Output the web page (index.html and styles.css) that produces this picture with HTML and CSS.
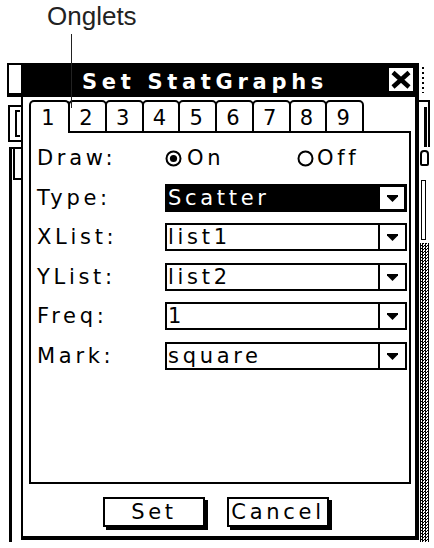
FILE: index.html
```html
<!DOCTYPE html>
<html lang="fr">
<head>
<meta charset="utf-8">
<title>Set StatGraphs</title>
<link rel="stylesheet" href="styles.css">
</head>
<body>
<div class="page">
  <div class="caption">Onglets</div>
  <div class="leader"></div>
  <div class="titlebar">
    <div class="tb-bar">
      <div class="tb-stub"></div>
      <div class="tb-title">Set StatGraphs</div>
      <div class="tb-close">
        <svg width="24" height="23" viewBox="0 0 24 23"><path d="M4 4.5L20 19M20 4.5L4 19" stroke="#000" stroke-width="4.5" fill="none"/></svg>
      </div>
    </div>
    <div class="tb-scroll"><div class="tb-dots"></div></div>
  </div>
  <div class="main">
    <div class="lstrip">
      <div class="lbox"><div class="lbracket"></div></div>
      <div class="lbar"><div class="lthumb"></div></div>
    </div>
    <div class="dialog">
      <div class="tabs">
        <div class="tab tab-first active">1</div>
        <div class="tab">2</div>
        <div class="tab">3</div>
        <div class="tab">4</div>
        <div class="tab">5</div>
        <div class="tab">6</div>
        <div class="tab">7</div>
        <div class="tab">8</div>
        <div class="tab">9</div>
      </div>
      <div class="panel">
        <div class="row">
          <div class="label">Draw:</div>
          <div class="radios">
            <div class="radio">
              <svg width="17" height="17" viewBox="0 0 17 17"><circle cx="8.5" cy="8.5" r="7" fill="none" stroke="#000" stroke-width="2"/><circle cx="8.5" cy="8.5" r="3.6" fill="#000"/></svg>
              <span class="rlabel">On</span>
            </div>
            <div class="radio">
              <svg width="17" height="17" viewBox="0 0 17 17"><circle cx="8.5" cy="8.5" r="7" fill="none" stroke="#000" stroke-width="2"/></svg>
              <span class="rlabel">Off</span>
            </div>
          </div>
        </div>
        <div class="row">
          <div class="label">Type:</div>
          <div class="select selected"><span class="val">Scatter</span><span class="arrow"><svg width="11" height="7" viewBox="0 0 11 7"><path d="M0 0H11V1.5L5.5 7L0 1.5Z" fill="#000"/></svg></span></div>
        </div>
        <div class="row">
          <div class="label">XList:</div>
          <div class="select"><span class="val">list1</span><span class="arrow"><svg width="11" height="7" viewBox="0 0 11 7"><path d="M0 0H11V1.5L5.5 7L0 1.5Z" fill="#000"/></svg></span></div>
        </div>
        <div class="row">
          <div class="label">YList:</div>
          <div class="select"><span class="val">list2</span><span class="arrow"><svg width="11" height="7" viewBox="0 0 11 7"><path d="M0 0H11V1.5L5.5 7L0 1.5Z" fill="#000"/></svg></span></div>
        </div>
        <div class="row">
          <div class="label">Freq:</div>
          <div class="select"><span class="val">1</span><span class="arrow"><svg width="11" height="7" viewBox="0 0 11 7"><path d="M0 0H11V1.5L5.5 7L0 1.5Z" fill="#000"/></svg></span></div>
        </div>
        <div class="row">
          <div class="label">Mark:</div>
          <div class="select"><span class="val">square</span><span class="arrow"><svg width="11" height="7" viewBox="0 0 11 7"><path d="M0 0H11V1.5L5.5 7L0 1.5Z" fill="#000"/></svg></span></div>
        </div>
      </div>
      <div class="buttons">
        <div class="btn">Set</div>
        <div class="btn">Cancel</div>
      </div>
    </div>
    <div class="rstrip">
      <div class="rbox"><div class="rbar"></div></div>
      <div class="rarrow"></div>
      <div class="rthin"></div>
      <div class="rdots"></div>
    </div>
  </div>
</div>
</body>
</html>
```

FILE: styles.css
```css
* { box-sizing: border-box; margin: 0; padding: 0; }
html, body { width: 434px; height: 548px; overflow: hidden; background: #fff; }
body { font-family: "DejaVu Sans", "Liberation Sans", sans-serif; color: #000; }

.page { position: relative; width: 434px; height: 548px; }

.caption {
  height: 63px;
  padding: 1px 0 0 47px;
  font-family: "Liberation Sans", Arial, sans-serif;
  font-size: 26px;
  line-height: 30px;
  color: #222;
}
.leader {
  position: absolute;
  left: 70.5px;
  top: 34px;
  width: 1.5px;
  height: 74px;
  background: #222;
  z-index: 5;
}

/* title bar */
.titlebar { display: flex; height: 34px; margin-left: 7px; width: 420px; }
.tb-bar { width: 412px; background: #000; display: flex; }
.tb-stub { width: 12px; margin: 2px 0 4px 2px; background: #fff; }
.tb-title {
  flex: 1;
  text-align: center;
  color: #fff;
  font-family: "DejaVu Sans", sans-serif;
  font-weight: bold;
  font-size: 21px;
  letter-spacing: 4.7px;
  line-height: 34px;
  padding-top: 2px;
  white-space: nowrap;
}
.tb-close { width: 24px; height: 23px; margin: 5px 6px 6px 0; background: #fff; display: flex; }
.tb-scroll { width: 8px; margin: 2px 0 4px; background: #fff; display: flex; justify-content: center; padding-top: 2px; }
.tb-dots { width: 2px; background: repeating-linear-gradient(#000 0 2px, transparent 2px 5px); }

/* main area */
.main { display: flex; height: 451px; }

.lstrip { width: 21px; display: flex; flex-direction: column; }
.lbox { margin: 8px 0 0 8px; width: 13px; height: 37px; border: 2px solid #000; border-right: none; padding: 3px 0 0 5px; }
.lbracket { width: 5px; height: 27px; border: 2px solid #000; border-right: none; }
.lbar { margin: 5px 0 0 9px; width: 12px; height: 395px; border-left: 3px solid #000; border-top: 2px solid #000; }
.lthumb { margin-left: 1px; width: 8px; height: 31px; border-left: 2px solid #000; border-bottom: 2px solid #000; }

.rstrip { width: 15px; display: flex; flex-direction: column; }
.rbox { margin-top: 3px; width: 11px; height: 47px; border-top: 2px solid #000; border-right: 2px solid #000; padding: 5px 0 0 5px; }
.rbar { width: 3px; height: 40px; background: #000; }
.rarrow { margin: 3px 0 0 1px; width: 9px; height: 16px; border: 2px solid #000; border-radius: 4px 4px 2px 2px; }
.rthin { margin: 14px 0 0 2px; width: 5px; height: 60px; border: 1px solid #000; }
.rdots {
  margin: 3px 0 0 1px;
  width: 9px;
  height: 299px;
  border-left: 1px solid #000;
  border-right: 1px solid #000;
  background-image: repeating-conic-gradient(#000 0% 25%, #fff 0% 50%);
  background-size: 3px 3px;
}

/* dialog */
.dialog {
  width: 398px;
  height: 443px;
  border-left: 2px solid #000;
  border-right: 4px solid #000;
  border-bottom: 4px solid #000;
  padding: 3px 4px 0 6px;
  display: flex;
  flex-direction: column;
}

.tabs { display: flex; height: 31px; position: relative; z-index: 1; }
.tab {
  width: 38.75px;
  height: 33px;
  margin-left: -2px;
  border: 2px solid #000;
  border-radius: 5px 5px 0 0;
  background: #fff;
  text-align: center;
  padding: 2px 3px 0 0;
  font-size: 21px;
  line-height: 28px;
}
.tab-first { width: 41px; margin-left: 0; }
.tab.active { border-bottom: none; }

.panel {
  height: 353px;
  border: 2px solid #000;
  padding: 11px 2px 0 6px;
  display: grid;
  grid-auto-rows: 28px;
  row-gap: 11.6px;
  align-content: start;
}
.row { display: grid; grid-template-columns: 128px 1fr; align-items: center; height: 28px; }
.label { font-size: 21px; line-height: 28px; letter-spacing: 3.7px; white-space: nowrap; }

.radios { display: grid; grid-template-columns: 132px 1fr; align-items: center; }
.radio { display: flex; align-items: center; gap: 5px; }
.radio + .radio { gap: 3px; }
.rlabel { font-size: 21px; line-height: 28px; letter-spacing: 3.7px; }

.select { height: 28px; border: 2px solid #000; display: flex; background: #fff; }
.select.selected { background: #000; color: #fff; }
.val { flex: 1; padding-left: 1px; font-size: 21px; line-height: 24px; letter-spacing: 3.7px; white-space: nowrap; overflow: hidden; }
.arrow { width: 27px; border-left: 2px solid #000; background: #fff; display: flex; align-items: center; justify-content: center; padding-top: 1px; }
.selected .arrow { border: 1px solid #000; border-left-width: 2px; }

.buttons { display: flex; justify-content: center; gap: 22px; margin-top: 13px; padding-right: 8px; }
.btn {
  width: 102px;
  height: 30px;
  border: 2px solid #000;
  box-shadow: 3px 3px 0 #000;
  text-align: center;
  font-size: 21px;
  line-height: 26px;
  letter-spacing: 3.7px;
  white-space: nowrap;
}
```
